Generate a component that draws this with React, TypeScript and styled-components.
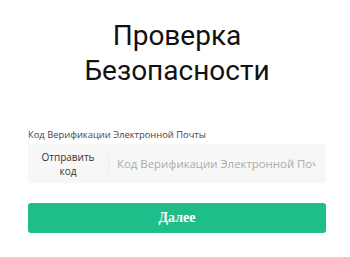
import React from "react";
import styled, { createGlobalStyle } from "styled-components";

const GlobalStyle = createGlobalStyle`
  html, body {
    margin: 0;
    padding: 0;
    background: #ffffff;
  }
  body {
    font-family: "Open Sans", "Noto Sans", sans-serif;
  }
`;

const Page = styled.div`
  width: 350px;
  height: 257px;
  box-sizing: border-box;
  padding: 18px 24px 0 28px;
  display: flex;
  flex-direction: column;
  align-items: stretch;
`;

const Title = styled.h1`
  margin: 0;
  font-family: Roboto, "Noto Sans", sans-serif;
  font-weight: 400;
  font-size: 28px;
  line-height: 35px;
  color: #111;
  text-align: center;
`;

const Label = styled.div`
  margin-top: 40px;
  font-size: 9.4px;
  line-height: 13px;
  color: #444;
`;

const Field = styled.div`
  margin-top: 3px;
  height: 39px;
  background: #f7f7f7;
  border-radius: 2px;
  display: flex;
  align-items: center;
`;

const SendCode = styled.button`
  flex: 0 0 80px;
  border: 0;
  background: transparent;
  padding: 0;
  font-family: "Open Sans", "Noto Sans", sans-serif;
  font-weight: 500;
  font-size: 10px;
  line-height: 14px;
  color: #333;
  text-align: center;
  cursor: pointer;
`;

const Divider = styled.span`
  width: 1px;
  height: 20px;
  background: #ebebeb;
`;

const CodeInput = styled.input`
  flex: 1;
  min-width: 0;
  border: 0;
  outline: none;
  background: transparent;
  padding: 0 10px 0 8px;
  font-family: "Open Sans", "Noto Sans", sans-serif;
  font-size: 11.4px;
  color: #333;

  &::placeholder {
    color: #ababab;
  }
`;

const Submit = styled.button`
  margin-top: 20px;
  height: 30px;
  border: 0;
  border-radius: 3px;
  background: #1ebe8a;
  color: #ffffff;
  font-family: "Liberation Serif", "DejaVu Serif", serif;
  font-weight: 700;
  font-size: 14px;
  cursor: pointer;
`;

export default function App() {
  return (
    <>
      <GlobalStyle />
      <Page>
        <Title>
          Проверка
          <br />
          Безопасности
        </Title>
        <Label>Код Верификации Электронной Почты</Label>
        <Field>
          <SendCode type="button">
            Отправить
            <br />
            код
          </SendCode>
          <Divider />
          <CodeInput placeholder="Код Верификации Электронной Почты" />
        </Field>
        <Submit type="button">Далее</Submit>
      </Page>
    </>
  );
}
